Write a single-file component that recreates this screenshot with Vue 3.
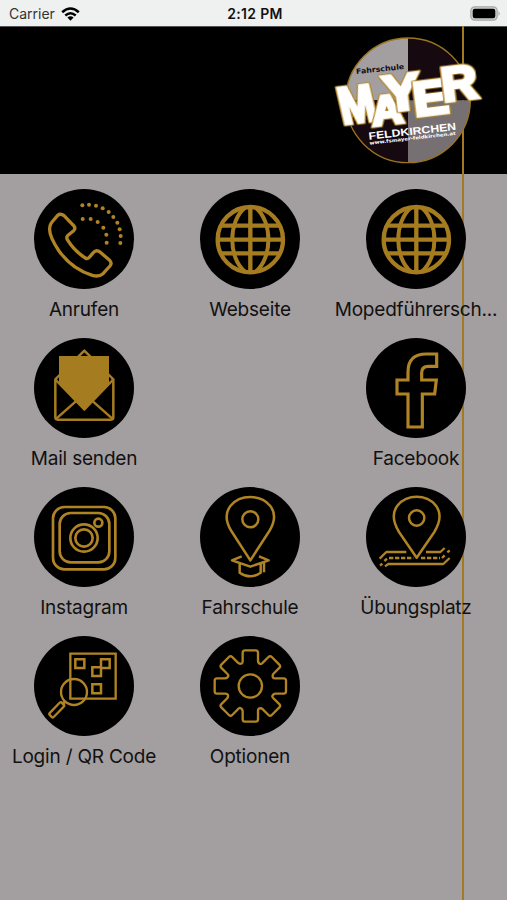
<script setup>
const tiles = [
  { label: 'Anrufen', icon: 'phone', box: '30 27 300 300' },
  { label: 'Webseite', icon: 'globe', box: '30 27 300 300' },
  { label: 'Mopedführersch...', icon: 'globe', box: '30 27 300 300' },
  { label: 'Mail senden', icon: 'mail', box: '30 24 300 300' },
  null,
  { label: 'Facebook', icon: 'facebook', box: '48 24 300 300' },
  { label: 'Instagram', icon: 'instagram', box: '30 21 300 300' },
  { label: 'Fahrschule', icon: 'school', box: '30 21 300 300' },
  { label: 'Übungsplatz', icon: 'track', box: '48 21 300 300' },
  { label: 'Login / QR Code', icon: 'qr', box: '102 18 300 300' },
  { label: 'Optionen', icon: 'gear', box: '30 18 300 300' },
];

const letters = [
  { char: 'M', x: 54, y: 294, size: 154, width: 108, skew: 6 },
  { char: 'A', x: 144, y: 299, size: 122, width: 94, skew: 0 },
  { char: 'Y', x: 180, y: 258, size: 150, width: 112, skew: 0 },
  { char: 'E', x: 270, y: 271, size: 142, width: 106, skew: 0 },
  { char: 'R', x: 355, y: 227, size: 142, width: 108, skew: 0 },
];

const dots = [
  [175, 76], [195, 74], [216, 77], [236, 85], [254, 96], [268, 111], [280, 128], [287, 148], [290, 168], [289, 189],
  [176, 117], [200, 117], [221, 126], [238, 143], [247, 164], [248, 188],
];

const cog = [0, 45, 90, 135, 180, 225, 270, 315].map((deg, i) => {
  const a = (deg * Math.PI) / 180;
  const pt = (x, y) => `${(181 + x * Math.cos(a) - y * Math.sin(a)).toFixed(1)} ${(168 + x * Math.sin(a) + y * Math.cos(a)).toFixed(1)}`;
  return `${i ? 'L' : 'M'}${pt(-23, -76)} L${pt(-23, -100)} Q${pt(-23, -107)} ${pt(-16, -107)} L${pt(16, -107)} Q${pt(23, -107)} ${pt(23, -100)} L${pt(23, -76)} Q${pt(23, -69)} ${pt(30, -66)} Q${pt(33, -65)} ${pt(37.5, -70)}`;
}).join(' ') + ' Z';
</script>

<template>
  <div class="screen">
    <header class="status">
      <div class="carrier">
        <span>Carrier</span>
        <svg width="19" height="14" viewBox="0 0 19 14">
          <g fill="none" stroke="#000" stroke-width="2.5">
            <path d="M1.2 5.2 Q9.5 -2.2 17.8 5.2" />
            <path d="M4.3 8.5 Q9.5 3.9 14.7 8.5" />
          </g>
          <path d="M6.4 10.6 Q9.5 8 12.6 10.6 L9.5 13.8 Z" />
        </svg>
      </div>
      <div class="time">2:12 PM</div>
      <div class="power">
        <svg width="31" height="15" viewBox="0 0 31 15">
          <rect x=".8" y=".8" width="26.4" height="13.4" rx="4" fill="#d0d0d0" stroke="#a8a8a8" stroke-width="1.2" />
          <rect x="2.7" y="2.7" width="22.6" height="9.6" rx="2.2" />
          <path d="M28.5 5 Q31 7.5 28.5 10 Z" fill="#a8a8a8" />
        </svg>
      </div>
    </header>

    <main class="content">
      <div class="stripe"></div>
      <div class="banner">
        <svg class="logo" width="182" height="147" viewBox="0 3 546 441">
          <path d="M249 36 A187 187 0 0 0 62 223 H249 Z" fill="#a39fa1" />
          <path d="M249 36 A187 187 0 0 1 436 223 H249 Z" fill="#160910" />
          <path d="M249 410 A187 187 0 0 1 62 223 H249 Z" fill="#160910" />
          <path d="M249 410 A187 187 0 0 0 436 223 H249 Z" fill="#767073" />
          <circle cx="249" cy="223" r="187" fill="none" stroke="#9b741f" stroke-width="4" />
          <text class="wide" transform="translate(94 144) rotate(-6)" font-size="22" textLength="145" lengthAdjust="spacingAndGlyphs" fill="#160d11">Fahrschule</text>
          <text
            v-for="l in letters"
            :key="l.char"
            class="letter"
            :transform="`translate(${l.x} ${l.y}) rotate(-7) skewX(${l.skew})`"
            :font-size="l.size"
            :textLength="l.width"
            lengthAdjust="spacingAndGlyphs"
          >{{ l.char }}</text>
          <text class="wide thin" transform="translate(132 341) rotate(-6.5)" font-size="31" textLength="264" lengthAdjust="spacingAndGlyphs" fill="#fff">FELDKIRCHEN</text>
          <text class="wide" transform="translate(134 356) rotate(-6.5)" font-size="14" textLength="260" lengthAdjust="spacingAndGlyphs" fill="#fff">www.fsmayer-feldkirchen.at</text>
        </svg>
      </div>

      <div class="grid">
        <div v-for="(tile, i) in tiles" :key="i" class="tile">
          <template v-if="tile">
            <div class="disc">
              <svg width="100" height="100" :viewBox="tile.box" fill="none" stroke="#b08424" stroke-width="7.5" stroke-linejoin="round">
                <g v-if="tile.icon === 'phone'">
                  <path d="M101 106 Q110 99 120 107 L149 137 Q156 145 149 152 L132 166 Q126 171 130 179 Q151 213 184 234 Q190 238 195 233 L208 218 Q217 207 228 216 L257 241 Q265 249 258 258 L237 281 Q224 292 205 286 Q145 268 105 213 Q74 167 77 143 Q78 133 84 126 Z" stroke-width="10" />
                  <circle v-for="(d, n) in dots" :key="n" :cx="d[0]" :cy="d[1]" r="6" fill="#b08424" stroke="none" />
                </g>
                <g v-else-if="tile.icon === 'globe'" stroke="#a67c20" stroke-width="13">
                  <circle cx="181" cy="179" r="98" />
                  <path d="M181 81 V277 M83 179 H279 M92 137 H270 M92 220 H270" />
                  <path d="M165 83 C114 125 114 233 165 275 M197 83 C248 125 248 233 197 275" stroke-width="12" />
                </g>
                <g v-else-if="tile.icon === 'mail'" stroke="#a67c20">
                  <path d="M94 148 V262 Q94 269 101 269 H261 Q268 269 268 262 V148 L181 62 Z" />
                  <path d="M94 148 L181 238 L268 148 M97 266 L158 212 M265 266 L204 212" />
                  <path d="M105 78 H255 V160 L181 242 L105 160 Z" fill="#a67c20" stroke="none" />
                  <path d="M103 143 V154 M258 143 V154" stroke="#000" stroke-width="2" />
                </g>
                <path v-else-if="tile.icon === 'facebook'" d="M174 291 V192 H141 V150 H174 V126 Q174 72 229 72 H260 V109 H235 Q215 109 215 128 V150 H259 L254 192 H217 V291 Z" stroke-width="9.5" stroke-linejoin="miter" />
                <g v-else-if="tile.icon === 'instagram'" stroke-width="8">
                  <rect x="87" y="81" width="187" height="187" rx="34" />
                  <rect x="107" y="99" width="149" height="148" rx="33" />
                  <circle cx="180" cy="174" r="41" />
                  <circle cx="180" cy="174" r="26" />
                  <circle cx="223" cy="128" r="12" />
                </g>
                <g v-else-if="tile.icon === 'school'">
                  <path d="M181 241 L124 153 C84 87 139 51 181 51 C223 51 278 87 238 153 Z" />
                  <circle cx="181" cy="118" r="24" />
                  <path d="M155 229 L126 241 L181 260 L236 241 L207 229 M149 251 V278 Q181 300 212 278 V251 M222 248 V277" stroke-width="7.5" />
                </g>
                <g v-else-if="tile.icon === 'track'">
                  <path d="M200 233 L147 156 C105 87 158 50 200 50 C242 50 295 87 253 156 Z" />
                  <circle cx="200" cy="114" r="23" />
                  <path d="M89 236 L109 216 H169 M228 216 H271 L284 204 M105 259 L115 252 H280 L299 234" stroke-width="7" />
                  <path d="M90 257 L97 251 M103 243 L111 236 M117 234 H190 M213 234 H270 M276 234 L284 226 M292 217 L299 211" stroke-width="7" stroke-dasharray="13 5" />
                </g>
                <g v-else-if="tile.icon === 'qr'" stroke-linejoin="miter">
                  <path d="M211 206 V71 H347 V206 Z" stroke-width="7" />
                  <path d="M226 88 H253 V114 H226 Z M303 88 H329 V114 H303 Z M277 112 H303 V138 H277 Z M277 163 H303 V190 H277 Z" />
                  <circle cx="222" cy="186" r="39" stroke-width="7" />
                  <path d="M195 215 L186 224" stroke-width="9" />
                  <rect x="144" y="231" width="52" height="17" rx="5" transform="rotate(-46 170 239)" stroke-width="7" />
                </g>
                <g v-else stroke-width="7">
                  <path :d="cog" />
                  <circle cx="181" cy="168" r="35" />
                </g>
              </svg>
            </div>
            <div class="label">{{ tile.label }}</div>
          </template>
        </div>
      </div>
    </main>
  </div>
</template>

<style>
body {
  margin: 0;
}
</style>

<style scoped>
.screen {
  display: flex;
  flex-direction: column;
  width: 507px;
  height: 900px;
  overflow: hidden;
  font-family: Inter, sans-serif;
  color: #111;
  background: #a39e9f;
}

.status {
  display: grid;
  grid-template-columns: 1fr auto 1fr;
  align-items: center;
  box-sizing: border-box;
  height: 26px;
  padding: 1px 6px 0 9px;
  font-size: 14px;
  background: #eff1f0;
}

.carrier {
  display: flex;
  align-items: center;
  gap: 6px;
  color: #333;
}

.time {
  font-weight: 600;
  font-size: 14px;
  letter-spacing: 0.3px;
}

.power {
  display: flex;
  justify-content: flex-end;
}

.content {
  position: relative;
  flex: 1;
}

/* gold line running behind the logo and the tiles */
.stripe {
  position: absolute;
  top: 0;
  bottom: 0;
  left: 462px;
  width: 2px;
  background: #a37a22;
}

.banner {
  display: flex;
  justify-content: flex-end;
  box-sizing: border-box;
  height: 148px;
  border-top: 1px solid #555;
  background: #000;
}

.logo {
  position: relative;
}

.letter {
  font-family: "Liberation Sans", sans-serif;
  font-weight: 700;
  fill: #fff;
  stroke: #fff;
  stroke-width: 10px;
  filter: drop-shadow(2px 0 0 #b08424) drop-shadow(-2px 0 0 #b08424) drop-shadow(0 2px 0 #b08424) drop-shadow(0 -2px 0 #b08424);
}

.wide {
  font-family: "DejaVu Sans", sans-serif;
  font-weight: 700;
}

.thin {
  font-family: "Liberation Sans", sans-serif;
}

.grid {
  position: relative;
  display: grid;
  grid-template-columns: repeat(3, 166px);
  grid-auto-rows: 149px;
  padding: 15px 0 0 1px;
}

.tile {
  display: flex;
  flex-direction: column;
  align-items: center;
}

.disc {
  width: 100px;
  height: 100px;
  border-radius: 50%;
  background: #000;
}

.disc svg {
  display: block;
}

.label {
  margin-top: 9px;
  font-size: 19px;
  line-height: 24px;
  letter-spacing: -0.2px;
  white-space: nowrap;
}
</style>
